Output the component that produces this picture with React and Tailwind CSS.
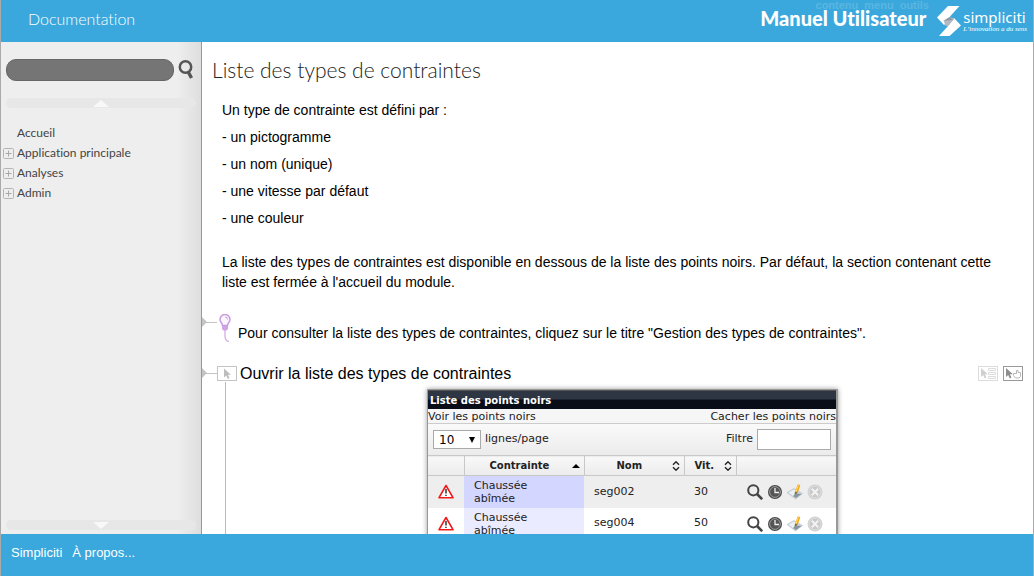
import React from "react";

const stroke = { fill: "none", stroke: "currentColor" };

function SearchIcon({ className }) {
  return (
    <svg viewBox="0 0 16 20" className={className} {...stroke} aria-hidden="true">
      <circle cx="7.5" cy="7" r="5.7" strokeWidth="2.5" />
      <path d="M10 11.500l3.500 6.500" strokeWidth="3.4" />
    </svg>
  );
}

function MagnifierIcon() {
  return (
    <svg viewBox="0 0 16 16" className="h-4 w-4 text-[#444]" {...stroke} aria-hidden="true">
      <circle cx="6.3" cy="6.3" r="5.1" strokeWidth="2" />
      <path d="M10 10l5.2 5.2" strokeWidth="2.6" />
    </svg>
  );
}

function ClockIcon() {
  return (
    <svg viewBox="0 0 16 16" className="h-4 w-4" aria-hidden="true">
      <circle cx="8" cy="8" r="7" fill="#444" />
      <circle cx="8" cy="8" r="5.4" fill="#555" stroke="#aaa" strokeWidth="0.9" />
      <path d="M8 4V8.500H12" fill="none" stroke="#eee" strokeWidth="1.300" />
    </svg>
  );
}

function NoteIcon() {
  return (
    <svg viewBox="0 0 16 16" className="h-4 w-4" aria-hidden="true">
      <path d="M0 8.500L7 4.500L15.500 9.500L8.500 15z" fill="#cdd6de" stroke="#b4bdc5" strokeWidth="0.600" />
      <path d="M1.500 8.500l5.500-3 4 2.500-5 4z" fill="#eaf0f5" />
      <path d="M6 12l3-2.500 5.500.5L9 14z" fill="#8795a1" />
      <path d="M12 .8L9.500 8" stroke="#f5a81c" strokeWidth="2.800" />
      <path d="M11.300 1.200L9 7.800" stroke="#ffdc6a" strokeWidth="1" />
      <path d="M8 7.500l-.5 3.500 3.400-2.500z" fill="#8a6a3c" />
    </svg>
  );
}

function DeleteIcon() {
  return (
    <svg viewBox="0 0 16 16" className="h-4 w-4" aria-hidden="true">
      <circle cx="8" cy="8" r="7.500" fill="#d2d2d2" />
      <circle cx="8" cy="8" r="5.800" fill="#c9c9c9" stroke="#e2e2e2" strokeWidth="0.700" />
      <path d="M4.800 4.800l6.400 6.400M11.200 4.800l-6.400 6.400" stroke="#f3f3f3" strokeWidth="2" />
    </svg>
  );
}

function WarningIcon() {
  return (
    <svg viewBox="0 0 16 15" className="mx-auto h-[15px] w-4" aria-hidden="true">
      <path d="M8 1.500L15 13.700H1z" fill="#fff" stroke="#f01a1a" strokeWidth="1.600" strokeLinejoin="round" />
      <path d="M8 5v4.500M8 10.700v1.300" stroke="#333" strokeWidth="1.500" />
    </svg>
  );
}

function BulbIcon() {
  return (
    <svg viewBox="0 0 12 29" className="h-[29px] w-3" fill="none" aria-hidden="true">
      <path d="M3.500 11.500C3.500 9 1 8.500 1 5.500a5 5 0 0 1 10 0c0 3-2.500 3.500-2.500 6z" stroke="#c99be0" strokeWidth="1.500" fill="#fbf5fe" />
      <path d="M6 3a2.500 2.500 0 0 1 2.500 2.500" stroke="#c99be0" />
      <path d="M3 12h6v3l-1.500 1.500h-3L3 15z" fill="#cfa4e4" />
      <path d="M6 16v6c0 3.500 1 5 4 5.500" stroke="#cfa4e4" strokeWidth="1.200" />
    </svg>
  );
}

const cursorPath = "M0 0v9l2.200-2 1.600 3.400 1.600-.8L3.900 6.300h3z";

function CursorBox() {
  return (
    <svg viewBox="0 0 20 15" className="mt-1 h-[15px] w-5 shrink-0" aria-hidden="true">
      <rect x="0.500" y="0.500" width="19" height="14" fill="#fff" stroke="#c4c4c4" />
      <path d={cursorPath} transform="translate(7 2.500)" fill="#bdbdbd" />
    </svg>
  );
}

function CollapseIcon() {
  return (
    <svg viewBox="0 0 20 15" className="h-[15px] w-5" aria-hidden="true">
      <rect x="0.500" y="0.500" width="19" height="14" fill="#fff" stroke="#dcdcdc" />
      <path d={cursorPath} transform="translate(3 2)" fill="#d0d0d0" />
      <path d="M10.500 2.500h7v2h-7zM10.500 6.500h7v2h-7zM10.500 10.500h7v2h-7z" fill="none" stroke="#dcdcdc" />
    </svg>
  );
}

function ExpandIcon() {
  return (
    <svg viewBox="0 0 20 15" className="h-[15px] w-5" aria-hidden="true">
      <rect x="0.500" y="0.500" width="19" height="14" fill="#fff" stroke="#999" />
      <path d={cursorPath} transform="translate(3 2)" fill="#8e8e8e" />
      <path d="M10.500 7.500h3V4.500h1.500v2h2.500v4l-1.500 1.500h-3.500L10.500 9.500z" fill="none" stroke="#b8b8b8" />
    </svg>
  );
}

function Connector() {
  return (
    <svg viewBox="0 0 15 10" className="h-[10px] w-[15px] shrink-0" aria-hidden="true">
      <path d="M0 0l5 5-5 5z" fill="#c4c4c4" />
      <path d="M4 5.500h11" stroke="#c4c4c4" />
    </svg>
  );
}

function PlusBox() {
  return (
    <svg viewBox="0 0 11 11" className="mt-1 h-[11px] w-[11px]" {...stroke} aria-hidden="true">
      <rect x="0.500" y="0.500" width="10" height="10" rx="1" stroke="#b4b4b4" />
      <path d="M5.500 2.500v6M2.500 5.500h6" stroke="#a8a8a8" />
    </svg>
  );
}

function Logo() {
  return (
    <a href="#simpliciti" aria-label="Simpliciti" className="flex text-white">
      <svg viewBox="0 0 24 31" className="h-[31px] w-6" aria-hidden="true">
        <path d="M11 0H22.500L13 10.500L13.500 14L7 19L0 11.500z" fill="#fff" />
        <path d="M7 19L13 14L17.500 15.500L12 20.500z" fill="#b3bac2" />
        <path d="M17 12L24 19.500L12.500 30H2L12 19z" fill="#fff" />
        <path d="M6.500 14.500L12.500 11L17.500 12.500L12 19L8.500 19.500z" fill="#b3bac2" />
        <path d="M7 14.800L12.800 11L16 14z" fill="#8f99a3" />
      </svg>
      <span className="ml-0.5 flex flex-col pt-[3px]">
        <span className="font-['Noto_Sans',sans-serif] text-[15px] leading-[17px]">simpliciti</span>
        <span className="font-['Liberation_Serif',serif] text-[7px] italic leading-[6px]">L’innovation a du sens</span>
      </span>
    </a>
  );
}

function ScrollBar({ down }) {
  return (
    <button
      type="button"
      aria-label={down ? "Défiler vers le bas" : "Défiler vers le haut"}
      className="mx-[5px] flex h-[10px] items-center justify-center rounded-full bg-[#e7e7e7]"
    >
      <svg viewBox="0 0 16 7" className="h-[7px] w-4" aria-hidden="true">
        <path d={down ? "M0 0h16L8 7z" : "M0 7h16L8 0z"} fill="#f8f8f8" />
      </svg>
    </button>
  );
}

const menu = [
  { label: "Accueil" },
  { label: "Application principale", sub: true },
  { label: "Analyses", sub: true },
  { label: "Admin", sub: true },
];

function Sidebar() {
  return (
    <aside className="flex w-[201px] shrink-0 flex-col border-r border-[#999] bg-[linear-gradient(to_right,#eee_88%,#dedede)] pb-1">
      <form className="flex items-start pl-[5px] pt-4">
        <input
          type="search"
          aria-label="Rechercher"
          className="mt-px h-[22px] w-[168px] rounded-[10px] border border-[#666] bg-[#757575] px-2 text-xs text-white outline-none"
        />
        <button type="button" aria-label="Lancer la recherche" className="ml-1 mt-0.5">
          <SearchIcon className="h-5 w-4 text-[#555]" />
        </button>
      </form>
      <div className="mt-[17px] flex flex-col">
        <ScrollBar />
      </div>
      <nav className="mt-[15px] flex-1">
        <ul>
          {menu.map((item) => (
            <li key={item.label} className="flex h-5 pl-0.5">
              <span className="w-[14px] pt-px">{item.sub && <PlusBox />}</span>
              <a href="#menu" className="font-['Lato',sans-serif] text-[12px] leading-5 text-[#444] [font-variant-ligatures:none]">
                {item.label}
              </a>
            </li>
          ))}
        </ul>
      </nav>
      <ScrollBar down />
    </aside>
  );
}

function SortIcon() {
  return (
    <svg viewBox="0 0 8 10" className="h-[10px] w-2 shrink-0" aria-hidden="true">
      <path d="M1 3.800L4 .8l3 3M1 6.200l3 3 3-3" fill="none" stroke="#222" strokeWidth="1.400" />
    </svg>
  );
}

const rows = [
  { type: "Chaussée abîmée", name: "seg002", speed: 30 },
  { type: "Chaussée abîmée", name: "seg004", speed: 50 },
];

const actions = [
  ["Voir", MagnifierIcon],
  ["Historique", ClockIcon],
  ["Modifier", NoteIcon],
  ["Supprimer", DeleteIcon],
];

function PointsPanel() {
  return (
    <section className="ml-[225px] w-[411px] border border-r-2 border-[#999] bg-white font-['DejaVu_Sans',sans-serif] text-[11px] text-[#222] shadow-[0_0_5px_#999]">
      <h3 className="h-[19px] border-t border-[#555] bg-[linear-gradient(#2e3644_45%,#080d18_50%)] pl-0.5 text-[10px] font-bold leading-[19px] text-white">
        Liste des points noirs
      </h3>
      <div className="flex h-[15px] justify-between border-b border-[#ccc] bg-[#f6f6f6] leading-4">
        <a href="#voir">Voir les points noirs</a>
        <a href="#cacher">Cacher les points noirs</a>
      </div>
      <div className="flex h-[31px] items-center justify-between bg-[linear-gradient(#fafafa,#ebebeb)] pl-[5px] pr-[5px]">
        <label className="flex items-center gap-1">
          <span className="grid items-center">
            <select className="col-start-1 row-start-1 h-[19px] w-12 appearance-none border border-[#aaa] bg-white pl-[5px] text-[12px] leading-[16px] text-black">
              <option>10</option>
            </select>
            <svg viewBox="0 0 6 6" className="pointer-events-none col-start-1 row-start-1 mr-[6px] h-[6px] w-[6px] justify-self-end" aria-hidden="true">
              <path d="M0 0h6L3 6z" />
            </svg>
          </span>
          lignes/page
        </label>
        <label className="flex items-center gap-1">
          Filtre
          <input type="text" className="h-[21px] w-[74px] border border-[#aaa] bg-white px-1" />
        </label>
      </div>
      <table className="w-full table-fixed border-collapse">
        <colgroup>
          <col className="w-9" />
          <col className="w-[120px]" />
          <col className="w-[100px]" />
          <col className="w-[52px]" />
          <col />
        </colgroup>
        <thead>
          <tr className="h-5 border-y border-[#c8c8c8] bg-[linear-gradient(#f8f8f8,#ececec)] text-left text-[10px]">
            <th className="border-r border-[#c8c8c8]" aria-label="Pictogramme" />
            <th className="border-r border-[#c8c8c8] p-0">
              <span className="flex items-center justify-between pl-[25px] pr-1">
                Contrainte
                <svg viewBox="0 0 8 4" className="h-1 w-2" aria-hidden="true"><path d="M0 4h8L4 0z" /></svg>
              </span>
            </th>
            <th className="border-r border-[#c8c8c8] p-0">
              <span className="flex items-center justify-between pl-8 pr-1">Nom <SortIcon /></span>
            </th>
            <th className="border-r border-[#c8c8c8] p-0">
              <span className="flex items-center justify-between pl-[10px] pr-1">Vit. <SortIcon /></span>
            </th>
            <th aria-label="Actions" />
          </tr>
        </thead>
        <tbody>
          {rows.map((row) => (
            <tr key={row.name} className="group h-8 odd:bg-[#eee] even:bg-white">
              <td className="p-0"><WarningIcon /></td>
              <td className="p-0 pl-[10px] pr-8 leading-[13px] group-odd:bg-[#d3d6ff] group-even:bg-[#eaebff]">{row.type}</td>
              <td className="p-0 pl-[10px]">{row.name}</td>
              <td className="p-0 pl-[10px]">{row.speed}</td>
              <td className="p-0">
                <span className="flex gap-1 pl-[11px]">
                  {actions.map(([label, Icon]) => (
                    <button key={label} type="button" aria-label={label}><Icon /></button>
                  ))}
                </span>
              </td>
            </tr>
          ))}
        </tbody>
      </table>
    </section>
  );
}

const features = ["- un pictogramme", "- un nom (unique)", "- une vitesse par défaut", "- une couleur"];

function Content() {
  return (
    <main className="min-w-0 flex-1 overflow-hidden bg-white font-['Liberation_Sans',Arial,sans-serif] text-[14px] text-black">
      <h1 className="pl-[10px] pt-3 font-['Lato',sans-serif] text-[21px] font-light leading-8 text-[#222]">
        Liste des types de contraintes
      </h1>
      <div className="px-5 pt-[14px]">
        <p className="leading-5">Un type de contrainte est défini par :</p>
        {features.map((text) => (
          <p key={text} className="mt-[7px] leading-5">{text}</p>
        ))}
        <p className="mt-6 leading-5">
          La liste des types de contraintes est disponible en dessous de la liste des points noirs. Par défaut, la
          section contenant cette liste est fermée à l'accueil du module.
        </p>
      </div>
      <div className="mt-[22px] flex items-start">
        <span className="mt-[3px]"><Connector /></span>
        <span className="ml-[2px]"><BulbIcon /></span>
        <p className="ml-[7px] mt-[9px] leading-5">
          Pour consulter la liste des types de contraintes, cliquez sur le titre "Gestion des types de contraintes".
        </p>
      </div>
      <div className="mt-[19px] flex h-5 items-start pr-[10px]">
        <span className="mt-[6px]"><Connector /></span>
        <CursorBox />
        <h2 className="ml-[3px] flex-1 text-[16px] leading-6">Ouvrir la liste des types de contraintes</h2>
        <span className="mt-1 flex gap-[5px]">
          <button type="button" aria-label="Tout replier"><CollapseIcon /></button>
          <button type="button" aria-label="Tout déplier"><ExpandIcon /></button>
        </span>
      </div>
      <div className="ml-[23px] border-l border-[#bbb] pt-[7px]">
        <div className="-ml-6">
          <PointsPanel />
        </div>
      </div>
    </main>
  );
}

export default function App() {
  return (
    <div className="flex h-screen flex-col overflow-hidden border-x border-[#aaa] bg-white">
      <header className="relative flex h-[42px] shrink-0 items-start justify-between bg-[#3aa8dc] pl-[27px] pr-[6px] text-white">
        <a href="#documentation" className="pt-[7px] font-['Lato',sans-serif] text-[16px] font-light leading-6 [font-variant-ligatures:none]">
          Documentation
        </a>
        <nav className="absolute right-[104px] top-[-3px] flex gap-[6px] font-['Liberation_Sans',Arial,sans-serif] text-[11px] font-bold leading-4 text-[#5ab6e2]">
          <a href="#contenu">contenu</a>
          <a href="#menu">menu</a>
          <a href="#outils">outils</a>
        </nav>
        <div className="relative flex items-start">
          <span className="pt-[6px] font-['Lato',sans-serif] text-[20px] font-black leading-6 [font-variant-ligatures:none]">Manuel Utilisateur</span>
          <span className="ml-[11px] pt-[6px]"><Logo /></span>
        </div>
      </header>
      <div className="flex min-h-0 flex-1">
        <Sidebar />
        <Content />
      </div>
      <footer className="flex h-[42px] shrink-0 gap-[10px] bg-[#3aa8dc] pl-[10px] pt-[10px] font-['Liberation_Sans',Arial,sans-serif] text-[13px] leading-[18px] text-white">
        <a href="#simpliciti">Simpliciti</a>
        <a href="#apropos">À propos...</a>
      </footer>
    </div>
  );
}
